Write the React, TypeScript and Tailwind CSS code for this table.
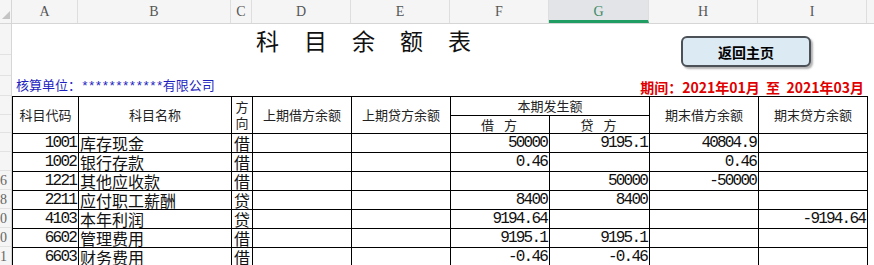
import React from 'react';

const cols = [
    { k: 'A', cls: 'w-[66px]' },
    { k: 'B', cls: 'w-[153px]' },
    { k: 'C', cls: 'w-[21px]' },
    { k: 'D', cls: 'w-[99px]' },
    { k: 'E', cls: 'w-[99px]' },
    { k: 'F', cls: 'w-[99px]' },
    { k: 'G', cls: 'w-[100px]' },
    { k: 'H', cls: 'w-[109px]' },
    { k: 'I', cls: 'w-[109px]' },
];

// row header cells on the left edge (only the tail of the numbers shows)
const rowHeads = [
    { h: 'h-[31px]', n: '' },
    { h: 'h-[21px]', n: '' },
    { h: 'h-[20px]', n: '' },
    { h: 'h-[19px]', n: '' },
    { h: 'h-[18px]', n: '' },
    { h: 'h-[19px]', n: '' },
    { h: 'h-[19px]', n: '' },
    { h: 'h-[19px]', n: '16' },
    { h: 'h-[19px]', n: '18' },
    { h: 'h-[19px]', n: '20' },
    { h: 'h-[19px]', n: '30' },
    { h: 'h-[19px]', n: '31' },
];

type Row = { code: string; name: string; dir: string; f?: string; g?: string; h?: string; i?: string };

const rows: Row[] = [
    { code: '1001', name: '库存现金', dir: '借', f: '50000', g: '9195.1', h: '40804.9' },
    { code: '1002', name: '银行存款', dir: '借', f: '0.46', h: '0.46' },
    { code: '1221', name: '其他应收款', dir: '借', g: '50000', h: '-50000' },
    { code: '2211', name: '应付职工薪酬', dir: '贷', f: '8400', g: '8400' },
    { code: '4103', name: '本年利润', dir: '贷', f: '9194.64', i: '-9194.64' },
    { code: '6602', name: '管理费用', dir: '借', f: '9195.1', g: '9195.1' },
    { code: '6603', name: '财务费用', dir: '借', f: '-0.46', g: '-0.46' },
];

const th = 'border border-black p-0 font-normal text-[13px] leading-[16px] text-[#222] text-center align-middle';
const td = 'border border-black p-0 align-bottom';
const num = "font-['Liberation_Mono','Noto_Sans_CJK_SC',monospace] text-[16px] tracking-[-1.8px] leading-[18px] text-right pr-[2px] text-[#111]";

export default function App() {
    return (
        <div className="w-[874px] h-[265px] overflow-hidden bg-white flex flex-col font-['Noto_Sans_CJK_SC',sans-serif]">
            {/* column letters */}
            <div className="flex h-[24px] shrink-0 bg-[#f5f5f5] border-b border-[#d6d6d6]">
                <div className="w-[12px] shrink-0 border-r border-[#d6d6d6] relative">
                    <svg width="10" height="10" viewBox="0 0 10 10" className="absolute left-[1px] top-[10px]">
                        <polygon points="9,1 9,9 1,9" fill="#c4c4c4" />
                    </svg>
                </div>
                {cols.map((c) => (
                    <div
                        key={c.k}
                        className={`${c.cls} shrink-0 border-r border-[#dedede] flex items-center justify-center font-['Liberation_Serif',serif] text-[14px] ${
                            c.k === 'G' ? 'bg-[#e2e4e7] text-[#3c8a66] border-b-[3px] border-b-[#1f9d63] pt-[3px]' : 'text-[#555]'
                        }`}
                    >
                        {c.k}
                    </div>
                ))}
            </div>

            <div className="flex flex-1 min-h-0">
                {/* row numbers */}
                <div className="w-[12px] shrink-0 bg-[#f5f5f5] border-r border-[#d6d6d6] flex flex-col">
                    {rowHeads.map((r, i) => (
                        <div
                            key={i}
                            className={`${r.h} shrink-0 border-b border-[#e2e2e2] overflow-hidden flex justify-end items-center pr-[4px] font-['Liberation_Serif',serif] text-[14px] text-[#666]`}
                        >
                            {r.n}
                        </div>
                    ))}
                </div>

                <div className="flex-1 flex flex-col">
                    {/* title + button */}
                    <div className="h-[52px] shrink-0 relative">
                        <div className="ml-[244px] mt-[1px] text-[23px] leading-[30px] tracking-[25px] text-[#111]">科目余额表</div>
                        <button className="absolute left-[669px] top-[12px] w-[130px] h-[31px] rounded-[6px] border-2 border-[#4b5157] bg-[#dbeaf3] shadow-[2px_2px_2px_rgba(0,0,0,0.3)] text-[14px] font-bold text-black leading-none">
                            返回主页
                        </button>
                    </div>

                    {/* unit + period */}
                    <div className="h-[20px] shrink-0 flex items-end justify-between pl-[4px] pr-[10px] pb-[1px] leading-[16px]">
                        <span className="text-[13px] text-[#1f1fbf]">
                            核算单位：
                            <span className="font-['Liberation_Mono',monospace] text-[13px] tracking-[-1px]">************</span>
                            有限公司
                        </span>
                        <span className="text-[14px] text-[#e00000] font-bold">期间：2021年01月&nbsp;&nbsp;至&nbsp;&nbsp;2021年03月</span>
                    </div>

                    <table className="border-collapse table-fixed w-[855px]">
                        <colgroup>
                            {cols.map((c) => (
                                <col key={c.k} className={c.cls} />
                            ))}
                        </colgroup>
                        <thead>
                            <tr className="h-[19px]">
                                <th rowSpan={2} className={th}>科目代码</th>
                                <th rowSpan={2} className={th}>科目名称</th>
                                <th rowSpan={2} className={th}>
                                    方<br />向
                                </th>
                                <th rowSpan={2} className={th}>上期借方余额</th>
                                <th rowSpan={2} className={th}>上期贷方余额</th>
                                <th colSpan={2} className={th}>本期发生额</th>
                                <th rowSpan={2} className={th}>期末借方余额</th>
                                <th rowSpan={2} className={th}>期末贷方余额</th>
                            </tr>
                            <tr className="h-[18px]">
                                <th className={`${th} tracking-[10px] pl-[8px]`}>借方</th>
                                <th className={`${th} tracking-[10px] pl-[8px]`}>贷方</th>
                            </tr>
                        </thead>
                        <tbody>
                            {rows.map((r) => (
                                <tr key={r.code} className="h-[19px]">
                                    <td className={td}>
                                        <div className={num}>{r.code}</div>
                                    </td>
                                    <td className={td}>
                                        <div className="text-[16px] leading-[18px] pl-[1px] text-[#111] whitespace-nowrap">{r.name}</div>
                                    </td>
                                    <td className={td}>
                                        <div className="text-[16px] leading-[18px] text-center text-[#111]">{r.dir}</div>
                                    </td>
                                    <td className={td} />
                                    <td className={td} />
                                    <td className={td}>
                                        <div className={num}>{r.f}</div>
                                    </td>
                                    <td className={td}>
                                        <div className={num}>{r.g}</div>
                                    </td>
                                    <td className={td}>
                                        <div className={num}>{r.h}</div>
                                    </td>
                                    <td className={td}>
                                        <div className={num}>{r.i}</div>
                                    </td>
                                </tr>
                            ))}
                        </tbody>
                    </table>
                </div>
            </div>
        </div>
    );
}
